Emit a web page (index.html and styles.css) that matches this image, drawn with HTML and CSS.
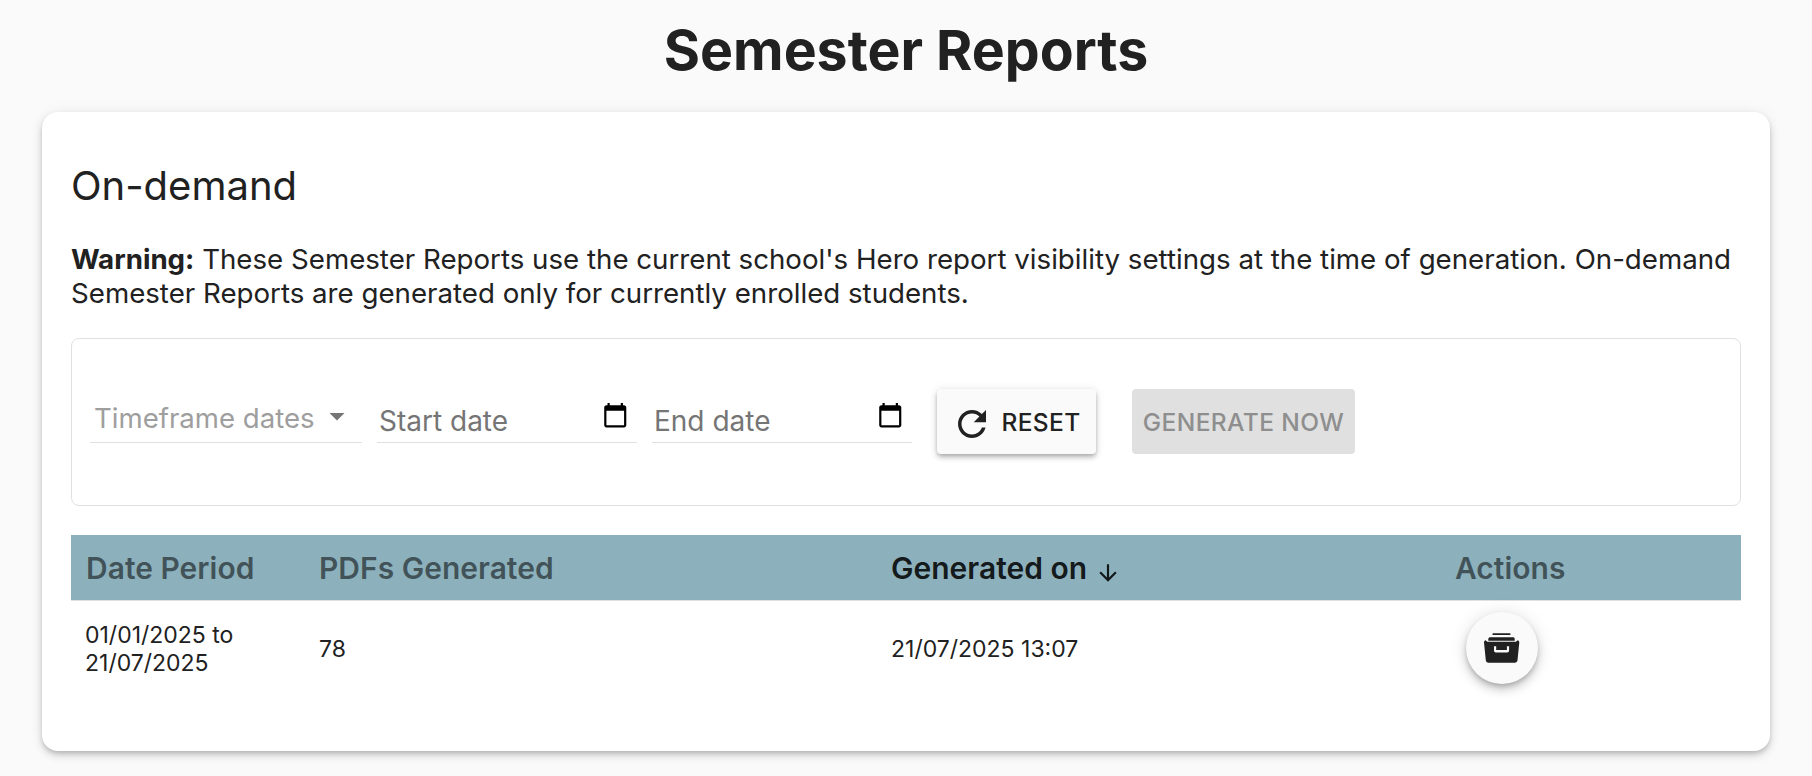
FILE: index.html
```html
<!DOCTYPE html>
<html lang="en">
<head>
<meta charset="utf-8">
<title>Semester Reports</title>
<link rel="stylesheet" href="styles.css">
</head>
<body>
<main class="page">
  <h1 class="title">Semester Reports</h1>
  <section class="card">
    <h2 class="heading">On-demand</h2>
    <p class="warning"><strong>Warning:</strong> These Semester Reports use the current school's Hero report visibility settings at the time of generation. On-demand Semester Reports are generated only for currently enrolled students.</p>
    <div class="filters">
      <div class="field field-select">
        <span class="select-label">Timeframe dates</span>
        <svg class="caret" viewBox="0 0 24 24"><path d="M7 10l5 5 5-5z"/></svg>
      </div>
      <div class="field field-date">
        <span class="date-label">Start date</span>
        <svg class="cal" viewBox="0 0 24 24"><path d="M20 3h-1V1h-2v2H7V1H5v2H4c-1.1 0-2 .9-2 2v16c0 1.1.9 2 2 2h16c1.1 0 2-.9 2-2V5c0-1.1-.9-2-2-2zm0 18H4V8h16v13z"/></svg>
      </div>
      <div class="field field-date">
        <span class="date-label">End date</span>
        <svg class="cal" viewBox="0 0 24 24"><path d="M20 3h-1V1h-2v2H7V1H5v2H4c-1.1 0-2 .9-2 2v16c0 1.1.9 2 2 2h16c1.1 0 2-.9 2-2V5c0-1.1-.9-2-2-2zm0 18H4V8h16v13z"/></svg>
      </div>
      <button class="btn btn-reset" type="button">
        <svg class="refresh" viewBox="0 0 24 24"><path d="M17.65 6.35C16.2 4.9 14.21 4 12 4c-4.42 0-7.99 3.58-7.99 8s3.57 8 7.99 8c3.73 0 6.84-2.55 7.73-6h-2.08c-.82 2.33-3.04 4-5.65 4-3.31 0-6-2.69-6-6s2.69-6 6-6c1.66 0 3.14.69 4.22 1.78L13 11h7V4l-2.35 2.35z"/></svg>
        RESET
      </button>
      <button class="btn btn-generate" type="button" disabled>GENERATE NOW</button>
    </div>
    <table class="reports">
      <thead>
        <tr>
          <th class="col-period">Date Period</th>
          <th class="col-pdfs">PDFs Generated</th>
          <th class="col-date active">Generated on <svg class="arrow" viewBox="0 0 24 24"><path d="M20 12l-1.41-1.41L13 16.17V4h-2v12.17l-5.58-5.59L4 12l8 8 8-8z"/></svg></th>
          <th class="col-actions">Actions</th>
        </tr>
      </thead>
      <tbody>
        <tr>
          <td class="cell-period">01/01/2025 to 21/07/2025</td>
          <td>78</td>
          <td>21/07/2025 13:07</td>
          <td class="cell-action">
            <button class="fab" type="button" aria-label="Archive">
              <svg class="drawer" viewBox="0 0 35.300 30"><path fill-rule="evenodd" d="M9.300.3h16.400a.85.85 0 0 1 0 1.700H9.300a.85.85 0 0 1 0-1.700zM6.300 4.300h22.700c1 0 1.700.7 1.700 1.700v1.700H4.300V6c0-1 1-1.700 2-1.700zM1.600 7.300c.6.800 1.500 1.500 2.700 1.500h26.700c1.200 0 2.100-.7 2.700-1.500.9.300 1.600 1 1.600 2.200l-1.800 17.700c-.2 1.600-1.200 2.500-2.700 2.500H4.500c-1.500 0-2.500-.9-2.700-2.500L0 9.500c0-1.200.7-1.900 1.600-2.200zM10 13.300v4.200c0 1.200.8 1.900 1.900 1.900h11.300c1.100 0 1.900-.7 1.900-1.900v-4.200h-2.200v3.600H12.200v-3.600z"/></svg>
            </button>
          </td>
        </tr>
      </tbody>
    </table>
  </section>
</main>
</body>
</html>
```
FILE: styles.css
```css
* { box-sizing: border-box; }
html, body { margin: 0; padding: 0; }
body {
  background: #fafafa;
  color: #212121;
  font-family: Inter, "Liberation Sans", sans-serif;
  height: 776px;
  overflow: hidden;
}
.page { padding: 0 42px; }
.title {
  margin: 0;
  height: 112px;
  padding-top: 16px;
  text-align: center;
  font-size: 55.400px;
  line-height: 68px;
  font-weight: 700;
  color: #212121;
}
.card {
  background: #fff;
  height: 639px;
  border-radius: 16px;
  padding: 50px 29px 0;
  box-shadow: 0 3px 5px -1px rgba(0,0,0,.18), 0 5px 8px rgba(0,0,0,.1), 0 1px 14px rgba(0,0,0,.08);
}
.heading {
  margin: 0;
  font-size: 40px;
  line-height: 48px;
  font-weight: 400;
}
.warning {
  margin: 32px 0 0;
  font-size: 27.680px;
  line-height: 34px;
}
.warning strong { font-weight: 700; }
.filters {
  margin-top: 28px;
  height: 168px;
  border: 1px solid #e0e0e0;
  border-radius: 8px;
  padding: 50px 18px 0;
  display: flex;
  align-items: flex-start;
}
.field {
  display: flex;
  height: 54px;
  border-bottom: 1px solid #e0e0e0;
  align-items: center;
}
.field-select { width: 272px; margin-right: 15px; padding: 0 0 0 4px; color: #9e9e9e; }
.field-date { width: 260px; margin-right: 15px; padding: 0 9px 0 2px; justify-content: space-between; color: #757575; }
.field-date:nth-child(3) { margin-right: 25px; }
.select-label { font-size: 27.600px; padding-top: 4px; }
.date-label { font-size: 28px; padding-top: 10px; }
.caret { width: 36px; height: 36px; fill: #757575; margin-left: 4px; }
.cal { width: 26.500px; height: 26.500px; fill: #000; }
.btn {
  font-family: inherit;
  border: 0;
  border-radius: 4px;
  height: 65px;
  font-size: 24.500px;
  letter-spacing: .4px;
  font-weight: 450;
  display: inline-flex;
  align-items: center;
  justify-content: center;
}
.btn-reset {
  width: 159px;
  background: #fafafa;
  color: #212121;
  box-shadow: 0 2px 4px -1px rgba(0,0,0,.2), 0 4px 5px rgba(0,0,0,.14), 0 1px 10px rgba(0,0,0,.12);
  gap: 8px;
  margin-right: 36px;
}
.refresh { width: 42px; height: 42px; fill: #212121; margin-top: 5px; margin-left: -1px; }
.btn-generate { width: 223px; background: #e0e0e0; color: #8e8e8e; }
.reports {
  margin-top: 29px;
  width: 100%;
  border-collapse: collapse;
  table-layout: fixed;
}
.reports th {
  background: #8cb1bc;
  height: 65px;
  padding: 2px 15px 0;
  text-align: left;
  font-size: 30px;
  font-weight: 600;
  color: rgba(0,0,0,.54);
}
.reports th.active { color: rgba(0,0,0,.87); }
.col-period { width: 233px; }
.col-pdfs { width: 572px; }
.col-date { width: 564px; }
.arrow { width: 26px; height: 26px; fill: rgba(0,0,0,.87); vertical-align: -7px; }
.reports td {
  padding: 13px 15px 11px;
  font-size: 23px;
  line-height: 28px;
  color: #212121;
  border-top: 1px solid #e0e0e0;
}
.reports .cell-period { padding-left: 14px; }
.reports .cell-action { padding: 11px 15px; }
.fab {
  display: flex;
  align-items: center;
  justify-content: center;
  width: 72px;
  height: 72px;
  margin-left: 11px;
  border: 0;
  padding: 0;
  border-radius: 50%;
  background: #fafafa;
  box-shadow: 0 3px 5px -1px rgba(0,0,0,.2), 0 6px 10px rgba(0,0,0,.14), 0 1px 18px rgba(0,0,0,.12);
}
.drawer { width: 35.300px; height: 30px; fill: #212121; }
```
